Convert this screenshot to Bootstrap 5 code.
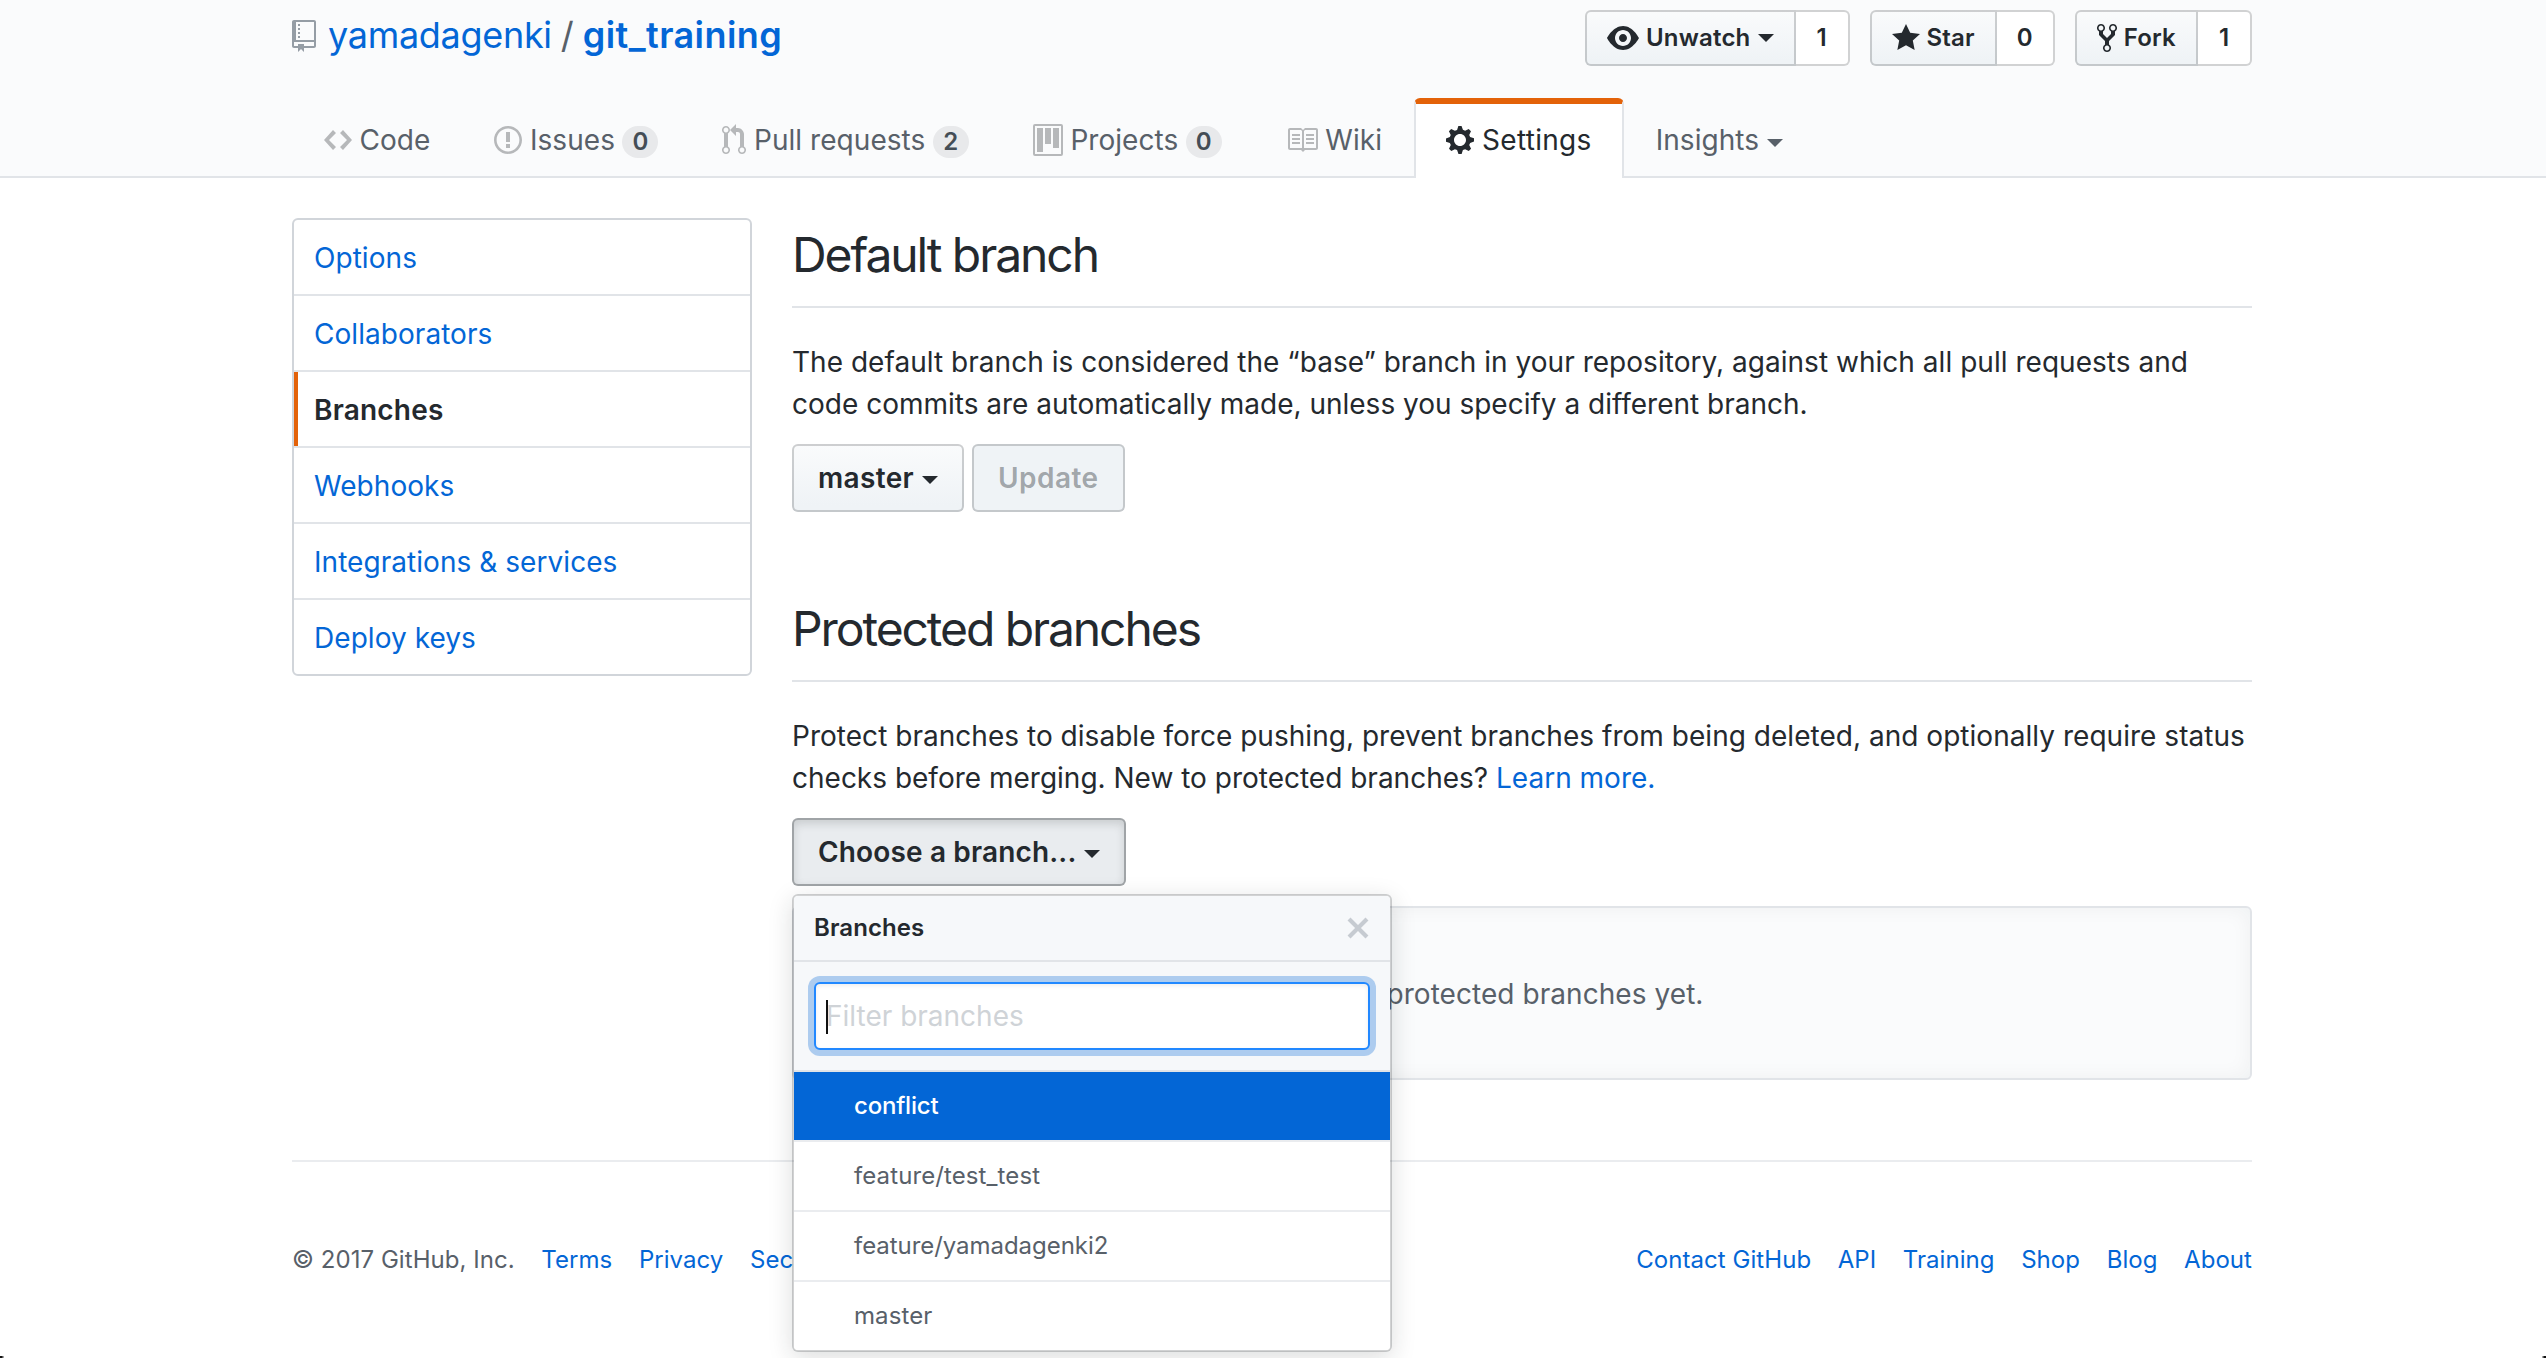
<!DOCTYPE html>
<html lang="en">
<head>
<meta charset="utf-8">
<meta name="viewport" content="width=device-width, initial-scale=1">
<title>Branches · yamadagenki/git_training</title>
<link rel="stylesheet" href="https://cdn.jsdelivr.net/npm/bootstrap@5.3.0/dist/css/bootstrap.min.css">
<style>
  :root { --ink: #24292e; --blue: #0366d6; --gray: #586069; --line: #e1e4e8; --edge: rgba(27,31,35,.2); }
  html, body { height: 1358px; overflow: hidden; }
  body { font: 400 28px/42px Inter, "Liberation Sans", sans-serif; color: var(--ink); background: #fff; position: relative; }
  a { color: var(--blue); text-decoration: none; }
  svg { fill: currentColor; display: block; flex: none; }
  .wrap { width: 1960px; margin: 0 auto 0 292px; }

  /* repository header */
  .repo-head { height: 178px; padding-top: 8px; background: #fafbfc; border-bottom: 2px solid var(--line); }
  .repo-title { font-size: 36px; line-height: 54px; font-weight: 400; height: 90px; }
  .repo-name svg { color: #959da5; margin: 12px 12px 0 0; }
  .repo-title .owner { letter-spacing: -.3px; }
  .repo-title .slash { color: var(--gray); margin: 0 9px 0 9px; }
  .repo-title .name { font-weight: 600; letter-spacing: .42px; }
  .social { gap: 20px; margin-top: 2px; }
  .gh-btn { display: inline-flex; align-items: center; height: 68px; padding: 0 24px; font-size: 28px; line-height: 40px; font-weight: 600; letter-spacing: .35px;
    color: var(--ink); background: linear-gradient(-180deg, #fafbfc, #eff3f6 90%); border: 2px solid var(--edge); border-radius: 6px; background-clip: border-box; background-origin: border-box; }
  .gh-btn:disabled { color: rgba(36,41,46,.4); background: #eff3f6; border-color: var(--edge); opacity: 1; letter-spacing: .45px; }
  .gh-btn-sm { height: 56px; padding: 0 20px; font-size: 24px; gap: 7px; letter-spacing: .2px; }
  .social .gh-btn-sm { border-radius: 6px 0 0 6px; }
  .tally { display: flex; align-items: center; justify-content: center; height: 56px; min-width: 54px; padding: 0 20px; font-size: 24px; font-weight: 600; background: #fff; border: 2px solid var(--edge); border-left: 0; border-radius: 0 6px 6px 0; }
  .caret { width: 0; height: 0; border: 8px solid transparent; border-top-color: currentColor; border-bottom: 0; }
  .gh-btn:not(.gh-btn-sm) .caret { margin: 3px 0 0 7.5px; }
  .tabs { height: 80px; }
  .tabs .nav-link { display: flex; align-items: flex-start; height: 80px; padding: 15px 30px 0; color: var(--gray); border: 2px solid transparent; border-top-width: 6px; border-bottom: 0; border-radius: 6px 6px 0 0; letter-spacing: .05px; gap: 7.5px; }
  .tabs .nav-link svg { color: #b6b8ba; margin-top: 5px; }
  .tabs .nav-link.active { color: var(--ink); background: #fff; border-color: #e36209 var(--line) transparent; letter-spacing: .3px; gap: 8px; }
  .tabs .nav-link.active svg { color: var(--ink); }
  .tabs .caret { margin-top: 20px; }
  .pill { width: 36px; height: 32px; margin-top: 7px; font-size: 24px; line-height: 32px; font-weight: 600; text-align: center; color: #444d56; background: rgba(27,31,35,.08); border-radius: 20px; }

  /* side menu */
  .settings { padding-top: 40px; }
  .side { width: 460px; border: 2px solid #d1d5da; border-radius: 6px; overflow: hidden; }
  .side .list-group-item { height: 76px; padding: 17px 20px 0; border: 0; border-bottom: 2px solid var(--line); color: var(--blue); background: #fff; letter-spacing: .05px; }
  .side .list-group-item:last-child { height: 74px; border-bottom: 0; }
  .side .list-group-item.active { margin: 0; color: var(--ink); font-weight: 600; letter-spacing: .2px; box-shadow: inset 4px 0 0 #e36209; }

  /* settings sections */
  .content { width: 1460px; }
  .sect + .sect { margin-top: 80px; }
  .sect-title { font-size: 48px; line-height: 72px; font-weight: 400; letter-spacing: -2.08px; margin: 0 0 33px; padding: 1px 0 15px; border-bottom: 2px solid var(--line); }
  .sect-text { margin: 0 0 19px; }
  .sect-text .wide { letter-spacing: .03px; }
  .actions { gap: 8.5px; }
  .gh-btn.pressed { letter-spacing: .15px; background: #e9ecef; border-color: rgba(27,31,35,.35); box-shadow: inset 0 4px 8px rgba(27,31,35,.15); }
  .blank { height: 174px; margin-top: 20px; padding-top: 65px; text-align: center; color: var(--gray); letter-spacing: .06px; background: #fafbfc; border: 2px solid var(--line); border-radius: 6px; box-shadow: inset 0 0 20px rgba(27,31,35,.05); }

  /* branch picker */
  .picker { position: absolute; top: 76px; left: 0; z-index: 5; width: 600px; font-size: 24px; background: #fff; background-clip: padding-box; border: 2px solid rgba(27,31,35,.2); border-radius: 6px; box-shadow: 0 6px 24px rgba(27,31,35,.15); overflow: hidden; }
  .picker-head { height: 66px; padding: 0 20px; font-weight: 600; line-height: 64px; letter-spacing: .08px; background: #f6f8fa; border-bottom: 2px solid var(--line); }
  .picker-head svg { color: #c6cbd1; margin-top: 16px; }
  .picker-filter { padding: 20px; height: 110px; background: #f6f8fa; border-bottom: 2px solid var(--line); }
  .picker-input { position: relative; height: 68px; padding: 11px 10px; font-size: 28px; color: #cfd3d7; background: #fff; border: 2px solid #2188ff; border-radius: 6px; box-shadow: inset 0 2px 4px rgba(27,31,35,.075), 0 0 0 6px rgba(3,102,214,.3); }
  .picker-input::before { content: ""; position: absolute; left: 10px; top: 16px; width: 2px; height: 34px; background: #111; }
  .picker .list-group-item { height: 70px; padding: 0 60px; line-height: 68px; color: var(--gray); border: 0; border-bottom: 2px solid #eaecef; letter-spacing: .1px; }
  .picker .list-group-item.long { letter-spacing: -.05px; }
  .picker .list-group-item:last-child { height: 68px; border-bottom: 0; }
  .picker .list-group-item.active { margin: 0; color: #fff; font-weight: 500; letter-spacing: -.2px; background: var(--blue); background-clip: padding-box; border-bottom: 2px solid #eaecef; }

  .foot { margin-top: 80px; padding-top: 80px; font-size: 24px; line-height: 36px; color: var(--gray); border-top: 2px solid #eaecef; letter-spacing: .05px; }
  .foot > div { gap: 26.6px; }
  .corner { position: absolute; top: 1356px; width: 4px; height: 2px; }
  .corner.bl { left: 0; background: linear-gradient(90deg, #111 40%, #ccc); }
  .corner.br { right: 0; background: linear-gradient(270deg, #111 40%, #ccc); }
</style>
<script src="https://cdn.jsdelivr.net/npm/bootstrap@5.3.0/dist/js/bootstrap.bundle.min.js"></script>
</head>
<body>
<header class="repo-head">
  <div class="wrap">
    <div class="repo-title d-flex justify-content-between align-items-start">
      <div class="repo-name d-flex">
        <svg width="24" height="32" viewBox="0 0 12 16"><path fill-rule="evenodd" d="M4 9H3V8h1v1zm0-3H3v1h1V6zm0-2H3v1h1V4zm0-2H3v1h1V2zm8-1v12c0 .55-.45 1-1 1H6v2l-1.5-1.5L3 16v-2H1c-.55 0-1-.45-1-1V1c0-.55.45-1 1-1h10c.55 0 1 .45 1 1zm-1 10H1v2h2v-1h3v1h5v-2zm0-10H2v9h9V1z"/></svg>
        <a href="#" class="owner">yamadagenki</a><span class="slash">/</span><a href="#" class="name">git_training</a>
      </div>
      <div class="social d-flex">
        <div class="d-flex">
          <button type="button" class="gh-btn gh-btn-sm"><svg width="32" height="32" viewBox="0 0 16 16"><path fill-rule="evenodd" d="M8.06 2C3 2 0 8 0 8s3 6 8.06 6C13 14 16 8 16 8s-3-6-7.94-6zM8 12c-2.2 0-4-1.78-4-4 0-2.2 1.8-4 4-4 2.22 0 4 1.8 4 4 0 2.22-1.78 4-4 4zm2-4c0 1.11-.89 2-2 2-1.11 0-2-.89-2-2 0-1.11.89-2 2-2 1.11 0 2 .89 2 2z"/></svg>Unwatch<i class="caret"></i></button>
          <span class="tally">1</span>
        </div>
        <div class="d-flex">
          <button type="button" class="gh-btn gh-btn-sm"><svg width="28" height="32" viewBox="0 0 14 16"><path fill-rule="evenodd" d="M14 6l-4.9-.64L7 1 4.9 5.36 0 6l3.6 3.26L2.67 14 7 11.67 11.33 14l-.93-4.74z"/></svg>Star</button>
          <span class="tally">0</span>
        </div>
        <div class="d-flex">
          <button type="button" class="gh-btn gh-btn-sm"><svg width="20" height="32" viewBox="0 0 10 16"><path fill-rule="evenodd" d="M8 1a1.993 1.993 0 0 0-1 3.72V6L5 8 3 6V4.72A1.993 1.993 0 0 0 2 1a1.993 1.993 0 0 0-1 3.72V6.5l3 3v1.78A1.993 1.993 0 0 0 5 15a1.993 1.993 0 0 0 1-3.72V9.5l3-3V4.72A1.993 1.993 0 0 0 8 1zM2 4.2C1.34 4.2.8 3.65.8 3c0-.65.55-1.2 1.2-1.2.65 0 1.2.55 1.2 1.2 0 .65-.55 1.2-1.2 1.2zm3 10c-.66 0-1.2-.55-1.2-1.2 0-.65.55-1.2 1.2-1.2.65 0 1.2.55 1.2 1.2 0 .65-.55 1.2-1.2 1.2zm3-10c-.66 0-1.2-.55-1.2-1.2 0-.65.55-1.2 1.2-1.2.65 0 1.2.55 1.2 1.2 0 .65-.55 1.2-1.2 1.2z"/></svg>Fork</button>
          <span class="tally">1</span>
        </div>
      </div>
    </div>
    <nav class="tabs nav">
      <a class="nav-link" href="#"><svg width="28" height="32" viewBox="0 0 14 16"><path fill-rule="evenodd" d="M9.5 3L8 4.5 11.5 8 8 11.5 9.5 13 14 8 9.5 3zm-5 0L0 8l4.5 5L6 11.5 2.5 8 6 4.5 4.5 3z"/></svg>Code</a>
      <a class="nav-link" href="#"><svg width="28" height="32" viewBox="0 0 14 16"><path fill-rule="evenodd" d="M7 2.3c3.14 0 5.7 2.56 5.7 5.7s-2.56 5.7-5.7 5.7A5.71 5.71 0 0 1 1.3 8c0-3.14 2.56-5.7 5.7-5.7zM7 1C3.14 1 0 4.14 0 8s3.14 7 7 7 7-3.14 7-7-3.14-7-7-7zm1 3H6v5h2V4zm0 6H6v2h2v-2z"/></svg>Issues<span class="pill">0</span></a>
      <a class="nav-link" href="#"><svg width="24" height="32" viewBox="0 0 12 16"><path fill-rule="evenodd" d="M11 11.28V5c-.03-.78-.34-1.47-.94-2.06C9.46 2.35 8.78 2.03 8 2H7V0L4 3l3 3V4h1c.27.02.48.11.69.31.21.2.3.42.31.69v6.28A1.993 1.993 0 0 0 10 15a1.993 1.993 0 0 0 1-3.72zm-1 2.92c-.66 0-1.2-.55-1.2-1.2 0-.65.55-1.2 1.2-1.2.65 0 1.2.55 1.2 1.2 0 .65-.55 1.2-1.2 1.2zM4 3c0-1.11-.89-2-2-2a1.993 1.993 0 0 0-1 3.72v6.56A1.993 1.993 0 0 0 2 15a1.993 1.993 0 0 0 1-3.72V4.72c.59-.34 1-.98 1-1.72zm-.8 10c0 .66-.55 1.2-1.2 1.2-.65 0-1.2-.55-1.2-1.2 0-.65.55-1.2 1.2-1.2.65 0 1.2.55 1.2 1.2zM2 4.2C1.34 4.2.8 3.65.8 3c0-.65.55-1.2 1.2-1.2.65 0 1.2.55 1.2 1.2 0 .65-.55 1.2-1.2 1.2z"/></svg>Pull requests<span class="pill">2</span></a>
      <a class="nav-link" href="#"><svg width="30" height="32" viewBox="0 0 15 16"><path fill-rule="evenodd" d="M10 12h3V2h-3v10zm-4-2h3V2H6v8zm-4 4h3V2H2v12zm-1 1h13V1H1v14zM14 0H1a1 1 0 0 0-1 1v14a1 1 0 0 0 1 1h13a1 1 0 0 0 1-1V1a1 1 0 0 0-1-1z"/></svg>Projects<span class="pill">0</span></a>
      <a class="nav-link" href="#"><svg width="32" height="32" viewBox="0 0 16 16"><path fill-rule="evenodd" d="M3 5h4v1H3V5zm0 3h4V7H3v1zm0 2h4V9H3v1zm11-5h-4v1h4V5zm0 2h-4v1h4V7zm0 2h-4v1h4V9zm2-6v9c0 .55-.45 1-1 1H9.5l-1 1-1-1H2c-.55 0-1-.45-1-1V3c0-.55.45-1 1-1h5.5l1 1 1-1H15c.55 0 1 .45 1 1zm-8 .5L7.5 3H2v9h6V3.5zm7-.5H9.5l-.5.5V12h6V3z"/></svg>Wiki</a>
      <a class="nav-link active" href="#"><svg width="28" height="32" viewBox="0 0 14 16"><path fill-rule="evenodd" d="M14 8.77v-1.6l-1.94-.64-.45-1.09.88-1.84-1.13-1.13-1.81.91-1.09-.45-.69-1.92h-1.6l-.63 1.94-1.11.45-1.84-.88-1.13 1.13.91 1.81-.45 1.09L0 7.23v1.59l1.94.64.45 1.09-.88 1.84 1.13 1.13 1.81-.91 1.09.45.69 1.92h1.59l.63-1.94 1.11-.45 1.84.88 1.13-1.13-.92-1.81.47-1.09L14 8.75v.02zM7 11c-1.66 0-3-1.34-3-3s1.34-3 3-3 3 1.34 3 3-1.34 3-3 3z"/></svg>Settings</a>
      <a class="nav-link" href="#">Insights<i class="caret"></i></a>
    </nav>
  </div>
</header>

<div class="wrap">
  <main class="settings d-flex align-items-start justify-content-between">
    <div class="side list-group">
      <a href="#" class="list-group-item">Options</a>
      <a href="#" class="list-group-item">Collaborators</a>
      <a href="#" class="list-group-item active">Branches</a>
      <a href="#" class="list-group-item">Webhooks</a>
      <a href="#" class="list-group-item">Integrations &amp; services</a>
      <a href="#" class="list-group-item">Deploy keys</a>
    </div>
    <div class="content">
      <section class="sect">
        <h2 class="sect-title">Default branch</h2>
        <p class="sect-text"><span class="wide">The default branch is considered the “base” branch in your repository, against which all pull requests and</span><br>code commits are automatically made, unless you specify a different branch.</p>
        <div class="actions d-flex">
          <button type="button" class="gh-btn">master<i class="caret"></i></button>
          <button type="button" class="gh-btn" disabled>Update</button>
        </div>
      </section>
      <section class="sect">
        <h2 class="sect-title">Protected branches</h2>
        <p class="sect-text"><span class="wide">Protect branches to disable force pushing, prevent branches from being deleted, and optionally require status</span><br>checks before merging. New to protected branches? <a href="#">Learn more.</a></p>
        <div class="position-relative d-flex">
          <button type="button" class="gh-btn pressed">Choose a branch...<i class="caret"></i></button>
          <div class="picker">
            <div class="picker-head d-flex justify-content-between">
              <span>Branches</span>
              <svg width="24" height="32" viewBox="0 0 12 16"><path fill-rule="evenodd" d="M7.48 8l3.75 3.75-1.48 1.48L6 9.48l-3.75 3.75-1.48-1.48L4.52 8 .77 4.25l1.48-1.48L6 6.52l3.75-3.75 1.48 1.48z"/></svg>
            </div>
            <div class="picker-filter"><div class="picker-input">Filter branches</div></div>
            <div class="list-group list-group-flush">
              <a href="#" class="list-group-item active">conflict</a>
              <a href="#" class="list-group-item">feature/test_test</a>
              <a href="#" class="list-group-item long">feature/yamadagenki2</a>
              <a href="#" class="list-group-item">master</a>
            </div>
          </div>
        </div>
        <div class="blank">No protected branches yet.</div>
      </section>
    </div>
  </main>
  <footer class="foot d-flex justify-content-between">
    <div class="d-flex"><span>© 2017 GitHub, Inc.</span><a href="#">Terms</a><a href="#">Privacy</a><a href="#">Security</a></div>
    <div class="d-flex"><a href="#">Contact GitHub</a><a href="#">API</a><a href="#">Training</a><a href="#">Shop</a><a href="#">Blog</a><a href="#">About</a></div>
  </footer>
</div>
<span class="corner bl"></span><span class="corner br"></span>
</body>
</html>
